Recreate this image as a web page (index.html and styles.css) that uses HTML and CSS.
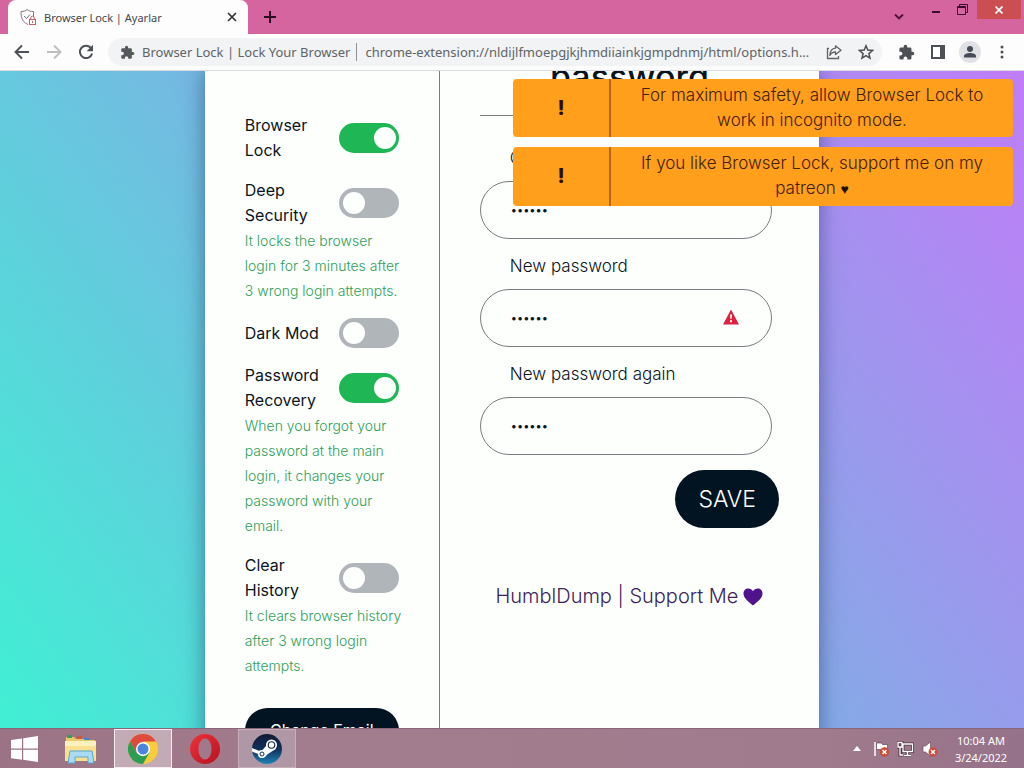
FILE: index.html
```html
<!DOCTYPE html>
<html lang="en">
<head>
<meta charset="utf-8">
<title>Browser Lock | Ayarlar</title>
<link rel="stylesheet" href="styles.css">
</head>
<body>
<div class="desktop">
  <header class="tabstrip">
    <div class="tab">
      <svg class="favicon" viewBox="0 0 18 18" width="18" height="18" fill="none" stroke-width="1"><path d="M9 16.500C4 14 2 11 2 3.500C5 3.500 6.500 3 8 1.500C10 3 11.500 3.500 14.500 3.500V9" stroke="#8d6f7c"/><path d="M5 8l2.500 2.500L11 6.500" stroke="#77707a"/><rect x="10.500" y="11.500" width="6" height="5" stroke="#c4606a"/><path d="M11.700 11.500V10a1.800 1.800 0 013.600 0v1.500M13.500 13v2" stroke="#c4606a"/></svg>
      <span class="tab-title">Browser Lock | Ayarlar</span>
      <button class="tab-close" aria-label="Close tab"><svg viewBox="0 0 10 10" width="10" height="10"><path d="M1 1l8 8M9 1L1 9" stroke="#333" stroke-width="1.700"/></svg></button>
    </div>
    <button class="icon-btn new-tab" aria-label="New tab"><svg viewBox="0 0 12 12" width="12" height="12"><path d="M6 0v12M0 6h12" stroke="#2c0d20" stroke-width="2"/></svg></button>
    <div class="window-buttons">
      <button class="win-btn tab-search" aria-label="Search tabs"><svg viewBox="0 0 10 8" width="10" height="8"><path d="M1 1.500l4 4 4-4" fill="none" stroke="#4b1236" stroke-width="1.900"/></svg></button>
      <button class="win-btn" aria-label="Minimize"><svg viewBox="0 0 8 20" width="8" height="20"><path d="M0 12h8" stroke="#3a0e2a" stroke-width="2"/></svg></button>
      <button class="win-btn" aria-label="Restore"><svg viewBox="0 0 11 11" width="11" height="11" fill="none" stroke="#3a0e2a"><path d="M2.500 2.500V.500h8v8h-2"/><path d="M.500 2.500h8v8h-8z"/><path d="M.500 3.500h8"/></svg></button>
      <button class="win-btn win-close" aria-label="Close window"><svg viewBox="0 0 8 8" width="8" height="8"><path d="M.500.500l7 7M7.500.500l-7 7" stroke="#fff" stroke-width="1.700"/></svg></button>
    </div>
  </header>

  <nav class="toolbar">
    <button class="icon-btn" aria-label="Back"><svg viewBox="0 0 16 16" width="16" height="16" fill="none" stroke="#4d5054" stroke-width="1.900"><path d="M15 8H2M8 1.500L1.500 8 8 14.500"/></svg></button>
    <button class="icon-btn" aria-label="Forward"><svg viewBox="0 0 16 16" width="16" height="16" fill="none" stroke="#bcbec0" stroke-width="1.900"><path d="M1 8h13M8 1.500L14.500 8 8 14.500"/></svg></button>
    <button class="icon-btn" aria-label="Reload"><svg viewBox="0 0 16 16" width="16" height="16"><path d="M13.200 4.300A6.200 6.200 0 1014.100 9.500" fill="none" stroke="#4d5054" stroke-width="2"/><path d="M15 .800v6.400H8.600z" fill="#4d5054"/></svg></button>
    <div class="omnibox">
      <svg viewBox="0 0 24 24" width="15" height="15" fill="#55585c"><path d="M20.500 11H19V7a2 2 0 00-2-2h-4V3.500a2.500 2.500 0 00-5 0V5H4a2 2 0 00-2 2v3.800h1.500a2.700 2.700 0 010 5.400H2V20a2 2 0 002 2h3.800v-1.500a2.700 2.700 0 015.400 0V22H17a2 2 0 002-2v-4h1.500a2.500 2.500 0 000-5z"/></svg>
      <label class="omni-title" for="url">Browser Lock | Lock Your Browser</label>
      <input class="url" id="url" type="text" value="chrome-extension://nldijlfmoepgjkjhmdiiainkjgmpdnmj/html/options.h...">
      <button class="icon-btn" aria-label="Share"><svg viewBox="0 0 16 16" width="16" height="16" fill="none" stroke="#5f6368" stroke-width="1.300"><path d="M3 4.500H1.500v10h11V12"/><path d="M9.500 1.800L15 6.200l-5.500 4.300V8C6.500 8 5 9 3.800 11.500 4 7 6 4.500 9.500 4.200z" stroke-linejoin="round"/></svg></button>
      <button class="icon-btn" aria-label="Bookmark"><svg viewBox="0 0 16 16" width="16" height="16" fill="none" stroke="#4d5054" stroke-width="1.500"><path d="M8 1.800l1.800 4.300 4.700.400-3.600 3.100 1.100 4.600L8 11.700l-4 2.500 1.100-4.600L1.500 6.500l4.700-.400z"/></svg></button>
    </div>
    <button class="icon-btn" aria-label="Extensions"><svg viewBox="0 0 24 24" width="17" height="17" fill="#4d5054"><path d="M20.500 11H19V7a2 2 0 00-2-2h-4V3.500a2.500 2.500 0 00-5 0V5H4a2 2 0 00-2 2v3.800h1.500a2.700 2.700 0 010 5.400H2V20a2 2 0 002 2h3.800v-1.500a2.700 2.700 0 015.400 0V22H17a2 2 0 002-2v-4h1.500a2.500 2.500 0 000-5z"/></svg></button>
    <button class="icon-btn" aria-label="Side panel"><svg viewBox="0 0 14 14" width="14" height="14"><path d="M1 1h12v12H1z" fill="#fff" stroke="#4d5054" stroke-width="2"/><path d="M9 1h4v12H9z" fill="#4d5054"/></svg></button>
    <button class="icon-btn" aria-label="Profile"><svg viewBox="0 0 22 22" width="22" height="22"><circle cx="11" cy="11" r="11" fill="#dfe1e5"/><circle cx="11" cy="8" r="3" fill="#454b57"/><path d="M5 16.500V15c0-2 3-3 6-3s6 1 6 3v1.500z" fill="#454b57"/></svg></button>
    <button class="icon-btn" aria-label="Menu"><svg viewBox="0 0 4 14" width="4" height="14" fill="#4d5054"><circle cx="2" cy="2" r="1.500"/><circle cx="2" cy="7" r="1.500"/><circle cx="2" cy="12" r="1.500"/></svg></button>
  </nav>

  <main class="page">
    <div class="card">
      <aside class="sidebar">
        <section class="option">
          <label class="option-row" for="lock">Browser Lock<input class="toggle" id="lock" type="checkbox" checked></label>
        </section>
        <section class="option">
          <label class="option-row" for="deep">Deep Security<input class="toggle" id="deep" type="checkbox"></label>
          <p class="hint">It locks the browser login for 3 minutes after 3 wrong login attempts.</p>
        </section>
        <section class="option">
          <label class="option-row" for="dark">Dark Mod<input class="toggle" id="dark" type="checkbox"></label>
        </section>
        <section class="option">
          <label class="option-row" for="recovery">Password Recovery<input class="toggle" id="recovery" type="checkbox" checked></label>
          <p class="hint">When you forgot your password at the main login, it changes your password with your email.</p>
        </section>
        <section class="option">
          <label class="option-row" for="history">Clear History<input class="toggle" id="history" type="checkbox"></label>
          <p class="hint">It clears browser history after 3 wrong login attempts.</p>
        </section>
        <button class="email-btn">Change Email</button>
      </aside>

      <section class="content">
        <h1 class="heading">password</h1>
        <form class="form">
          <label class="field-label" for="current">Current password</label>
          <div class="field-wrap">
            <input class="field" id="current" type="password" value="123456">
          </div>
          <label class="field-label" for="new">New password</label>
          <div class="field-wrap">
            <input class="field" id="new" type="password" value="123456">
            <svg class="warning" viewBox="0 0 16 16" width="16" height="16"><path d="M8 .500L16 15.500H0z" fill="#e0213d"/><path d="M7 5.500h2l-.400 4.500H7.400z" fill="#fff"/><path d="M7 11.300h2v2H7z" fill="#fff"/></svg>
          </div>
          <label class="field-label" for="again">New password again</label>
          <div class="field-wrap">
            <input class="field" id="again" type="password" value="123456">
          </div>
          <button class="save" type="button">SAVE</button>
        </form>
        <a class="support" href="#">HumblDump | Support Me <svg viewBox="0 0 20 18" width="20" height="18"><path d="M10 17.500C3 12 .500 9 .500 5.500.500 2.500 2.500.500 5.300.500 7.300.500 9 1.500 10 3.200 11 1.500 12.700.500 14.700.500c2.800 0 4.800 2 4.800 5 0 3.500-2.500 6.500-9.500 12z" fill="#4f148b"/></svg></a>
      </section>
    </div>

    <div class="toasts">
      <div class="toast"><strong class="toast-mark">!</strong><p class="toast-text">For maximum safety, allow Browser Lock to work in incognito mode.</p></div>
      <div class="toast"><strong class="toast-mark">!</strong><p class="toast-text">If you like Browser Lock, support me on my patreon <span class="heart">♥</span></p></div>
    </div>
  </main>

  <footer class="taskbar">
    <button class="task" aria-label="Start"><svg viewBox="0 0 27 26" width="27" height="26" fill="#fff"><path d="M0 4l11-1.600V12.500H0zM12.200 2.200L27 0v12.500H12.200zM0 13.700h11v10L0 22.200zM12.200 13.700H27V26l-14.800-2.200z"/></svg></button>
    <button class="task" aria-label="File Explorer"><svg viewBox="0 0 32 30" width="32" height="30"><path d="M1 3h8l2 2h9l2 1h8v20H1z" fill="#e9c96b"/><path d="M2 1h5v3H2z" fill="#3b9a52"/><path d="M12 2h5v3h-5z" fill="#d4572f"/><path d="M19 4h6v2h-6z" fill="#3f8ac9"/><path d="M0 7h31v20H0z" fill="#f7e08f"/><path d="M0 7h31v5H0z" fill="#fdf2bd"/><path d="M3 29l2-12h22l2 12h-6v-6H10v6z" fill="#a9dcf2" stroke="#5aa7d0"/></svg></button>
    <button class="task task-active" aria-label="Chrome"><svg viewBox="0 0 30 30" width="30" height="30"><circle cx="15" cy="15" r="15" fill="#f9cc3c"/><path d="M2 7.500A15 15 0 0128 7.500H15L8.500 19z" fill="#dd4b3c"/><path d="M2 7.500L8.500 18.800 15 22.500 21.500 18.500 15 30A15 15 0 012 7.500z" fill="#2c9d52"/><circle cx="15" cy="15" r="7" fill="#fff"/><circle cx="15" cy="15" r="5.500" fill="#4a86e0"/></svg></button>
    <button class="task" aria-label="Opera"><svg viewBox="0 0 30 30" width="30" height="30"><defs><linearGradient id="op" x1="0" y1="0" x2="1" y2="1"><stop offset="0" stop-color="#f0323c"/><stop offset="1" stop-color="#b5121f"/></linearGradient></defs><path fill="url(#op)" fill-rule="evenodd" d="M15 0a15 15 0 100 30 15 15 0 000-30zm0 4.500c3.800 0 6.500 4.500 6.500 10.500S18.800 25.500 15 25.500 8.500 21 8.500 15 11.200 4.500 15 4.500z"/></svg></button>
    <button class="task task-open" aria-label="Steam"><svg viewBox="0 0 30 30" width="30" height="30"><defs><linearGradient id="st" x1="0" y1="0" x2="0" y2="1"><stop offset="0" stop-color="#101a35"/><stop offset=".5" stop-color="#12305a"/><stop offset="1" stop-color="#1f83b5"/></linearGradient></defs><circle cx="15" cy="15" r="15" fill="url(#st)"/><path d="M0 14l9 3.800 6-7 9 4-8.500 5.500-2.500 2.500L0 17.500z" fill="#fff"/><circle cx="19.500" cy="11" r="5.500" fill="#fff"/><circle cx="19.500" cy="11" r="3.800" fill="#12264a"/><circle cx="19.500" cy="11" r="2.700" fill="#fff"/><circle cx="10" cy="20" r="4" fill="#fff"/><circle cx="10" cy="20" r="2" fill="none" stroke="#12305a"/></svg></button>
    <div class="tray">
      <svg viewBox="0 0 8 5" width="8" height="5"><path d="M4 0l4 5H0z" fill="#fff"/></svg>
      <svg viewBox="0 0 17 16" width="17" height="16"><path d="M2 1v14" stroke="#fff" stroke-width="1.500"/><path d="M3.500 2h5l1 1.500h5V10H9L8 8.500H3.500z" fill="#fff" stroke="#4b3340" stroke-width=".6"/><circle cx="11.500" cy="11" r="4.700" fill="#cf4a38"/><path d="M9.500 9l4 4M13.500 9l-4 4" stroke="#fff" stroke-width="1.500"/></svg>
      <svg viewBox="0 0 17 16" width="17" height="16" fill="none"><g stroke="#4b3340" stroke-width="3"><path d="M6 3h9.500v7.500H6zM10.500 11v3M7 14.500h7M1 1.500h4V6H1zM3 6v8h3"/></g><g stroke="#fff" stroke-width="1.300"><path d="M6 3h9.500v7.500H6zM10.500 11v3M7 14.500h7M1 1.500h4V6H1zM3 6v8h3"/></g></svg>
      <svg viewBox="0 0 17 16" width="17" height="16"><path d="M2 5v6h2.500l5 4V1l-5 4z" fill="#fff" stroke="#5a404e" stroke-width=".6"/><circle cx="12" cy="11" r="4.500" fill="#cf4a38"/><path d="M10 9l4 4M14 9l-4 4" stroke="#fff" stroke-width="1.500"/></svg>
    </div>
    <div class="clock"><time>10:04 AM</time><time>3/24/2022</time></div>
  </footer>
</div>
</body>
</html>
```

FILE: styles.css
```css
* { box-sizing: border-box; }
body { margin: 0; font-family: Inter, sans-serif; font-size: 16px; line-height: 25px; color: #0b141c; }
button { font: inherit; border: 0; padding: 0; background: none; color: inherit; }
p, h1 { margin: 0; }
svg { display: block; flex: none; }

.desktop { display: flex; flex-direction: column; height: 100vh; overflow: hidden; }

/* Browser frame */
.tabstrip { display: flex; align-items: center; height: 34px; padding-left: 8px; background: #d5659f; font-family: "Noto Sans", sans-serif; }
.tab { display: flex; align-items: center; gap: 7px; width: 240px; height: 100%; padding: 0 11px; background: #fdfdfe; border-radius: 8px 8px 0 0; }
.tab-title { flex: 1; font-size: 11px; color: #45474a; }
.new-tab { width: 44px; }
.icon-btn { display: flex; align-items: center; justify-content: center; flex: none; }
.window-buttons { display: flex; align-self: stretch; align-items: flex-start; margin-left: auto; padding-right: 3px; }
.win-btn { display: flex; align-items: center; justify-content: center; width: 26px; height: 19px; }
.tab-search { width: 48px; height: 34px; }
.win-close { width: 44px; margin-left: 2px; background: #cb4f52; }

.toolbar { display: flex; align-items: center; height: 37px; padding: 0 6px; background: #fdfdfe; border-bottom: 1px solid #d9dbde; font-family: "Noto Sans", sans-serif; }
.toolbar .icon-btn { width: 32px; height: 28px; }
.omnibox { display: flex; flex: 1; align-items: center; height: 28px; margin: 0 8px 0 6px; padding-left: 12px; border-radius: 14px; background: #f1f3f5; font-size: 13px; color: #606468; }
.omni-title { margin-left: 7px; padding-right: 6px; line-height: 18px; border-right: 1px solid #8d9094; }
.url { flex: 1; min-width: 0; padding: 0 0 0 8px; border: 0; background: none; font: inherit; color: inherit; text-overflow: ellipsis; }

/* Options page */
.page { position: relative; flex: 1; min-height: 0; overflow: hidden; background: linear-gradient(55deg, #40f0d4, #7db0e4 50%, #c07cf8); }
.card { display: flex; width: 60%; min-height: 100%; margin: 0 auto; background: #fdfffd; box-shadow: 0 0 20px rgba(20, 40, 80, .5); }
.sidebar { display: flex; flex-direction: column; gap: 15px; width: 235px; padding: 42px 40px 0; border-right: 1px solid #777c80; }
.option-row { display: flex; align-items: center; justify-content: space-between; gap: 8px; }
.hint { margin-right: -5px; font-size: 14px; font-weight: 300; color: #2e9e57; }
.toggle { position: relative; appearance: none; flex: none; width: 60px; height: 30px; margin: 0; border-radius: 15px; background: #b0b5ba; }
.toggle::before { content: ""; position: absolute; top: 4px; left: 4px; width: 22px; height: 22px; border-radius: 50%; background: #fdfffd; }
.toggle:checked { background: #1fb655; }
.toggle:checked::before { left: auto; right: 3px; }
.email-btn { height: 45px; margin-top: 15px; border-radius: 23px; background: #021422; color: #fdfffd; }

.content { flex: 1; min-width: 0; padding: 0 40px; }
.heading { margin-top: -18px; height: 63px; border-bottom: 1px solid #777c80; font-size: 34px; font-weight: 500; line-height: 48px; text-align: center; }
.form { display: flex; flex-direction: column; padding-top: 15px; }
.field-label { padding: 15px 30px 10px; font-size: 17px; font-weight: 300; }
.field-wrap { position: relative; margin-right: 7px; }
.field { display: block; width: 100%; height: 58px; padding: 0 30px; border: 1px solid #777c80; border-radius: 29px; background: none; font: inherit; font-size: 11px; color: inherit; }
.warning { position: absolute; top: 20px; right: 33px; }
.save { align-self: flex-end; width: 104px; height: 58px; margin-top: 15px; border-radius: 29px; background: #021422; color: #fdfffd; font-size: 23px; font-weight: 300; }
.support { display: flex; align-items: center; justify-content: center; gap: 5px; margin-top: 56px; font-size: 20px; font-weight: 300; color: #3b2358; text-decoration: none; }

.toasts { position: absolute; top: 8px; right: 11px; display: flex; flex-direction: column; gap: 10px; width: 500px; }
.toast { display: flex; min-height: 58px; border-radius: 4px; background: #ff9f1c; color: #45200c; }
.toast-mark { display: flex; align-items: center; justify-content: center; width: 98px; border-right: 2px solid #b5690f; color: #2a0d0a; font-size: 20px; font-weight: 800; }
.toast-text { flex: 1; padding: 4px 20px; font-size: 17px; font-weight: 300; text-align: center; }
.heart { font-family: "DejaVu Sans", sans-serif; font-size: 14px; color: #1c100c; }

/* Taskbar */
.taskbar { display: flex; flex: none; align-items: center; height: 40px; background: linear-gradient(90deg, #9b7384, #a27d8d 30%, #a07b8d 80%, #96728a); border-top: 1px solid #87657a; color: #fff; }
.task { display: flex; align-items: center; justify-content: center; width: 58px; height: 39px; margin-right: 4px; border: 1px solid transparent; }
.task:first-child { width: 48px; }
.task-active { background: #c3abb5; border-color: #f4ecf0; }
.task-open { background: #b097a5; border-color: #c4afba; }
.tray { display: flex; align-items: center; gap: 7px; margin-left: auto; }
.tray svg:first-child { margin-right: 5px; }
.clock { display: flex; flex-direction: column; align-items: center; width: 86px; font: 11px/17px "Noto Sans", sans-serif; }
```
